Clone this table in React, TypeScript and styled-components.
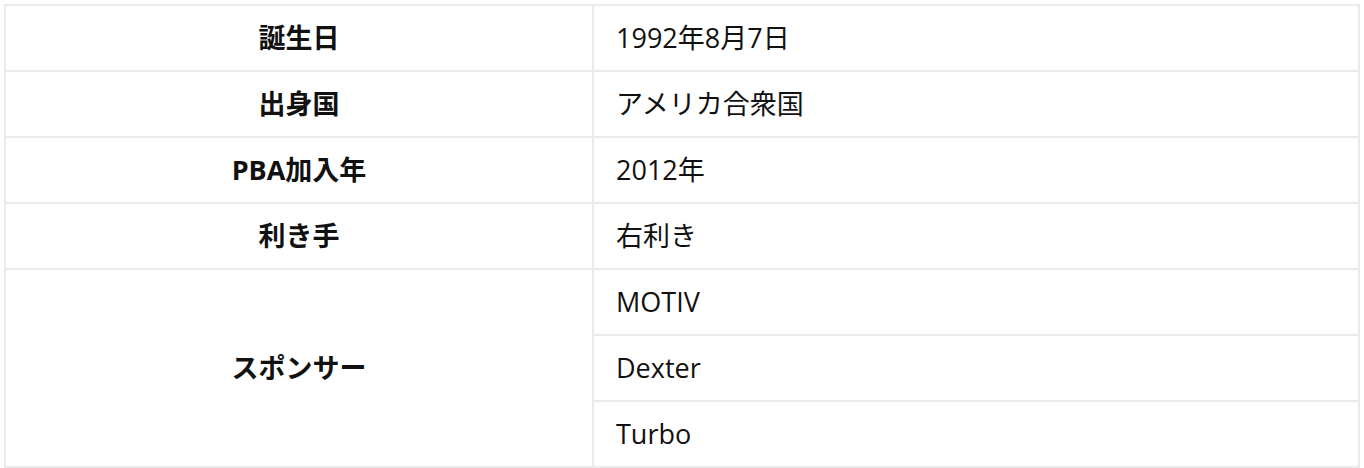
import React from "react";
import styled, { createGlobalStyle } from "styled-components";

const Global = createGlobalStyle`
  html, body { margin: 0; padding: 0; background: #fff; }
  body { font-family: "Open Sans", "Noto Sans CJK JP", sans-serif; color: #111; }
`;

const Wrap = styled.div`
  padding: 4px;
`;

const Table = styled.table`
  width: 100%;
  border-collapse: collapse;
  border: 2px solid #eaeaea;
  font-size: 27px;
  line-height: 1.2;
`;

const Th = styled.th`
  width: 586px;
  border: 2px solid #eaeaea;
  font-weight: 700;
  text-align: center;
  height: 64px;
  padding: 0;
`;

const Td = styled.td`
  border: 2px solid #eaeaea;
  height: 64px;
  padding: 0 0 0 22px;
  text-align: left;
`;

const rows: [string, string[]][] = [
  ["誕生日", ["1992年8月7日"]],
  ["出身国", ["アメリカ合衆国"]],
  ["PBA加入年", ["2012年"]],
  ["利き手", ["右利き"]],
  ["スポンサー", ["MOTIV", "Dexter", "Turbo"]],
];

export default function App() {
  return (
    <Wrap>
      <Global />
      <Table>
        <tbody>
          {rows.flatMap(([k, vals]) =>
            vals.map((v, i) => (
              <tr key={k + i}>
                {i === 0 && <Th rowSpan={vals.length}>{k}</Th>}
                <Td>{v}</Td>
              </tr>
            ))
          )}
        </tbody>
      </Table>
    </Wrap>
  );
}
